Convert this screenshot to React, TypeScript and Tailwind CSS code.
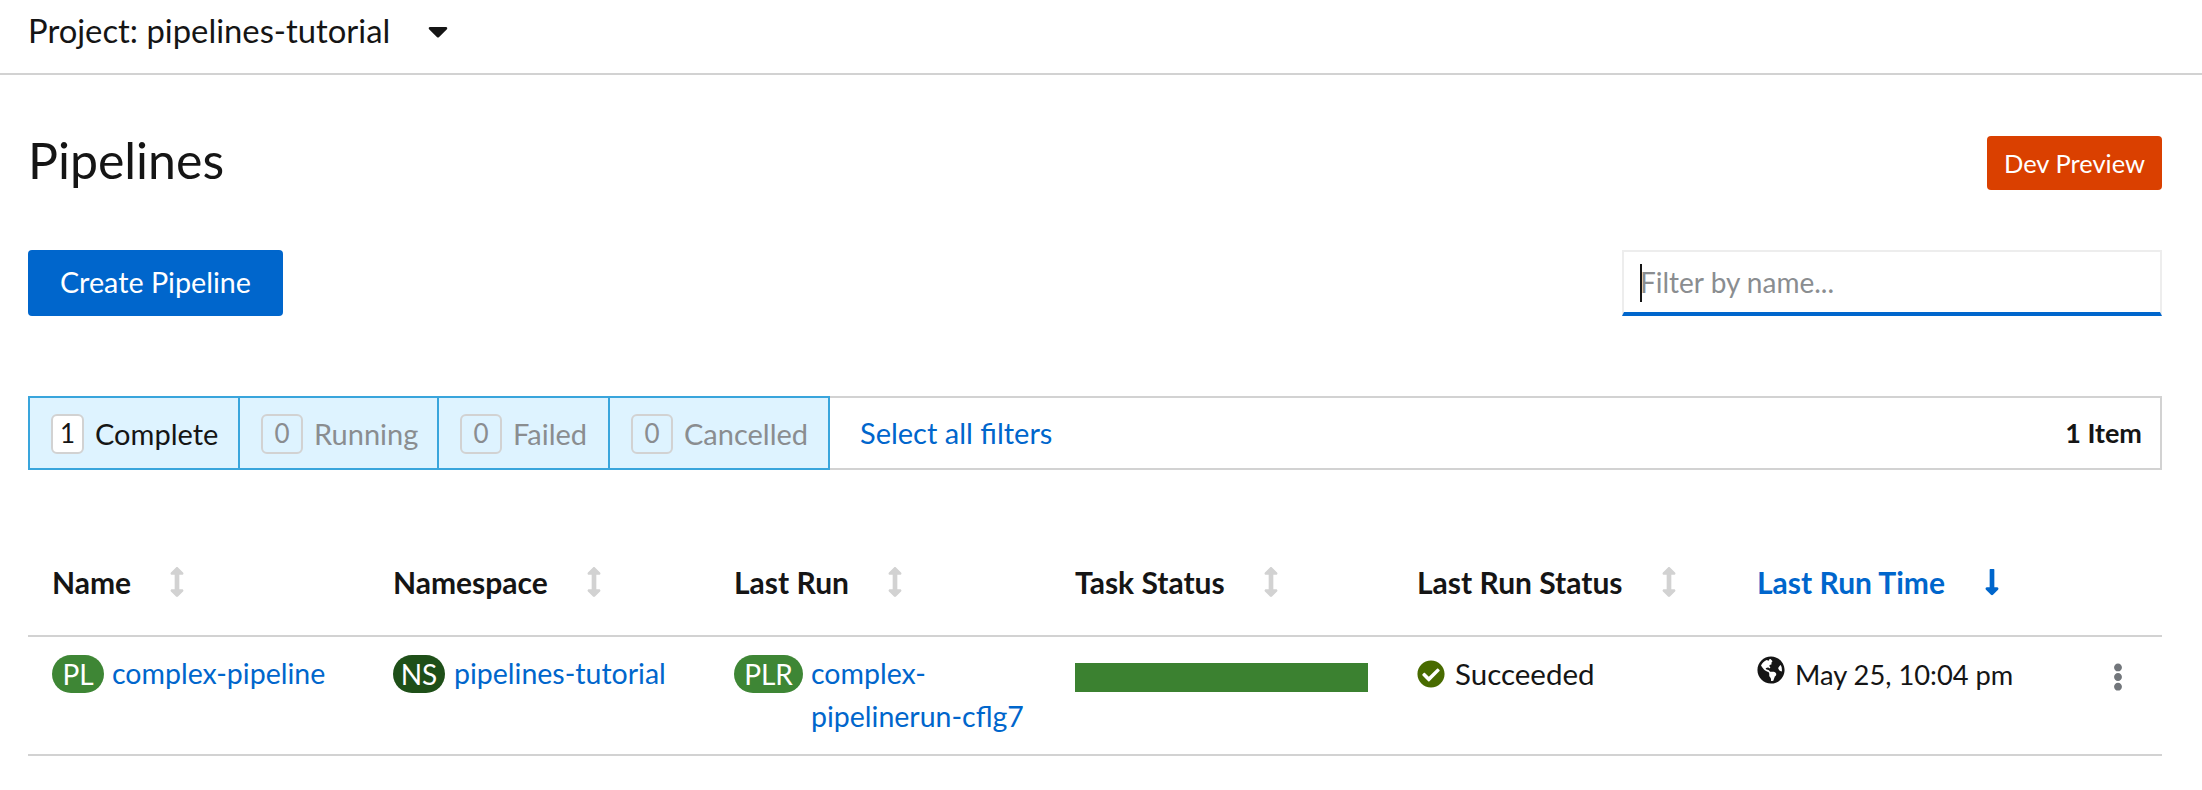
import {
  FaArrowsAltV,
  FaCaretDown,
  FaCheckCircle,
  FaEllipsisV,
  FaGlobeAmericas,
  FaLongArrowAltDown,
} from "react-icons/fa";

const filters = [
  { count: 1, label: "Complete", active: true, width: "w-[208px]" },
  { count: 0, label: "Running", active: false, width: "w-[199px]" },
  { count: 0, label: "Failed", active: false, width: "w-[171px]" },
  { count: 0, label: "Cancelled", active: false, width: "w-[220px]" },
];

const columns = ["Name", "Namespace", "Last Run", "Task Status", "Last Run Status"];

function ResourceBadge({ text, color, width }: { text: string; color: string; width: string }) {
  return (
    <span
      className={`${color} ${width} flex h-[38px] shrink-0 items-center justify-center rounded-[19px] text-[28px] leading-none text-white`}
    >
      {text}
    </span>
  );
}

export default function App() {
  return (
    <div className="h-[790px] w-[2202px] overflow-hidden bg-white font-['Lato','Open_Sans',sans-serif] text-[28.5px] text-[#151515]">
      <div className="flex h-[75px] items-center border-b-2 border-[#d2d2d2] pb-[12px] pl-[28px] text-[32.8px]">
        <span>Project: pipelines-tutorial</span>
        <FaCaretDown className="ml-[32px] text-[32px] text-[#151515]" />
      </div>

      <div className="pr-[40px] pl-[28px]">
        <div className="mt-[61px] flex h-[54px] items-center justify-between">
          <h1 className="-mt-[6px] text-[50px] leading-none">Pipelines</h1>
          <div className="flex h-[54px] w-[175px] items-center justify-center rounded-[4px] bg-[#da4000] text-[25.5px] text-white">
            Dev Preview
          </div>
        </div>

        <div className="mt-[60px] flex h-[66px] items-stretch justify-between">
          <button className="w-[255px] rounded-[4px] bg-[#0066cc] text-[28.7px] text-white">
            Create Pipeline
          </button>
          <div className="relative flex w-[540px] items-center border-2 border-b-[4px] border-[#ededed] border-b-[#0066cc] pl-[16px] text-[28px] text-[#8a8d90]">
            <span className="absolute top-[12px] left-[16px] h-[38px] w-[2px] bg-[#151515]" />
            Filter by name...
          </div>
        </div>

        <div className="mt-[80px] flex h-[74px] items-stretch border-2 border-[#d2d2d2]">
          <div className="-my-[2px] -ml-[2px] flex border-2 border-[#39a5dc] bg-[#def3ff]">
            {filters.map((f, i) => (
              <div
                key={f.label}
                className={`${f.width} flex items-center pt-[1px] ${i > 0 ? "border-l-2 border-[#39a5dc] pl-[21px]" : "pl-[21px]"} ${f.active ? "text-[#151515]" : "text-[#8a8d90]"}`}
              >
                <span
                  className={`flex h-[40px] items-center justify-center rounded-[6px] border-2 border-[#d2d2d2] text-[26px] ${f.active ? "w-[33px] bg-white" : "w-[42px]"}`}
                >
                  {f.count}
                </span>
                <span className="ml-[11px] text-[29px]">{f.label}</span>
              </div>
            ))}
          </div>
          <a className="ml-[30px] self-center text-[29px] text-[#0066cc]">Select all filters</a>
          <span className="mr-[18px] ml-auto self-center text-[27px] font-bold">1 Item</span>
        </div>

        <div className="mt-[59px] grid h-[108px] grid-cols-[341px_341px_341px_342px_340px_1fr] items-center border-b-2 border-[#d2d2d2] pl-[24px] text-[30px] font-bold">
          {columns.map((c) => (
            <div key={c} className="flex items-center">
              {c}
              <FaArrowsAltV className="ml-[31px] text-[30px] text-[#d2d2d2]" />
            </div>
          ))}
          <div className="flex items-center text-[#0066cc]">
            Last Run Time
            <FaLongArrowAltDown className="ml-[32px] text-[30px]" />
          </div>
        </div>

        <div className="grid h-[119px] grid-cols-[341px_341px_341px_342px_340px_1fr] border-b-2 border-[#d2d2d2] pt-[18px] pl-[24px] leading-[43px]">
          <div className="flex items-start gap-[8px] text-[#0066cc]">
            <ResourceBadge text="PL" color="bg-[#3e8635]" width="w-[52px]" />
            <span className="-mt-[3px]">complex-pipeline</span>
          </div>
          <div className="flex items-start gap-[9px] text-[#0066cc]">
            <ResourceBadge text="NS" color="bg-[#1e4f18]" width="w-[52px]" />
            <span className="-mt-[3px]">pipelines-tutorial</span>
          </div>
          <div className="flex items-start gap-[8px] text-[#0066cc]">
            <ResourceBadge text="PLR" color="bg-[#3e8635]" width="w-[69px]" />
            <span className="-mt-[3px] w-[240px]">complex-pipelinerun-cflg7</span>
          </div>
          <div className="pt-[8px]">
            <div className="h-[29px] w-[293px] bg-[#3b8130]" />
          </div>
          <div className="flex items-start">
            <FaCheckCircle className="mt-[5px] text-[28px] text-[#486b00]" />
            <span className="ml-[10px] -mt-[3px] text-[29.5px]">Succeeded</span>
          </div>
          <div className="relative flex items-start">
            <FaGlobeAmericas className="mt-[1px] text-[28px]" />
            <span className="ml-[10px] -mt-[2px] text-[27.3px]">May 25, 10:04 pm</span>
            <FaEllipsisV className="absolute top-[8px] left-[347px] text-[28px] text-[#72767b]" />
          </div>
        </div>
      </div>
    </div>
  );
}
